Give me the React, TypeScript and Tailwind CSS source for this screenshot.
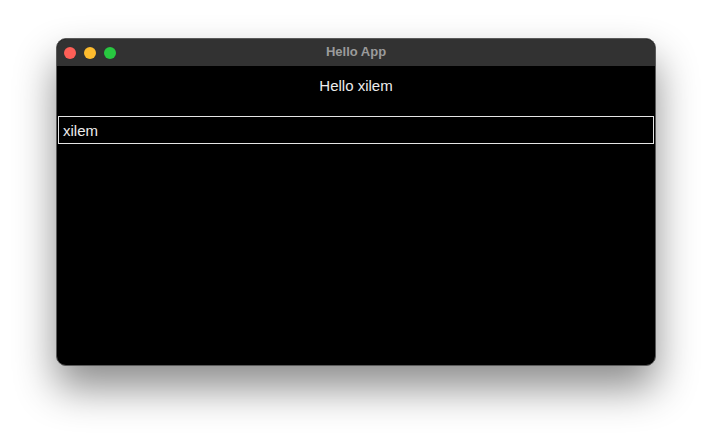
export default function App() {
  return (
    <div className="h-[440px] w-[712px] bg-white pt-[38px] pl-[56px]" style={{ fontFamily: 'Inter, "Liberation Sans", sans-serif' }}>
      <div className="flex h-[328px] w-[600px] flex-col overflow-hidden rounded-[10px] border border-[#5a5a5a] bg-black shadow-[0_22px_40px_rgba(0,0,0,0.45)]">
        <div className="relative flex h-[27px] shrink-0 items-center bg-[#323232] px-[7px]">
          <div className="flex gap-[8px]">
            <span className="h-[12px] w-[12px] rounded-full bg-[#fe5f57]" />
            <span className="h-[12px] w-[12px] rounded-full bg-[#febc2e]" />
            <span className="h-[12px] w-[12px] rounded-full bg-[#28c840]" />
          </div>
          <div className="absolute inset-0 flex items-center justify-center pb-[1px] text-[13px] font-bold text-[#9b9b9b]" style={{ fontFamily: '"Liberation Sans", sans-serif' }}>
            Hello App
          </div>
        </div>
        <div className="flex flex-col" style={{ fontFamily: '"Liberation Sans", sans-serif' }}>
          <p className="mt-[9px] text-center text-[15px] text-[#ececec]">Hello xilem</p>
          <div className="mx-[1px] mt-[18px] flex h-[28px] items-center border border-[#e5e5e5] px-[4px] pt-[3px] text-[15px] text-[#ececec]">
            xilem
          </div>
        </div>
      </div>
    </div>
  );
}
